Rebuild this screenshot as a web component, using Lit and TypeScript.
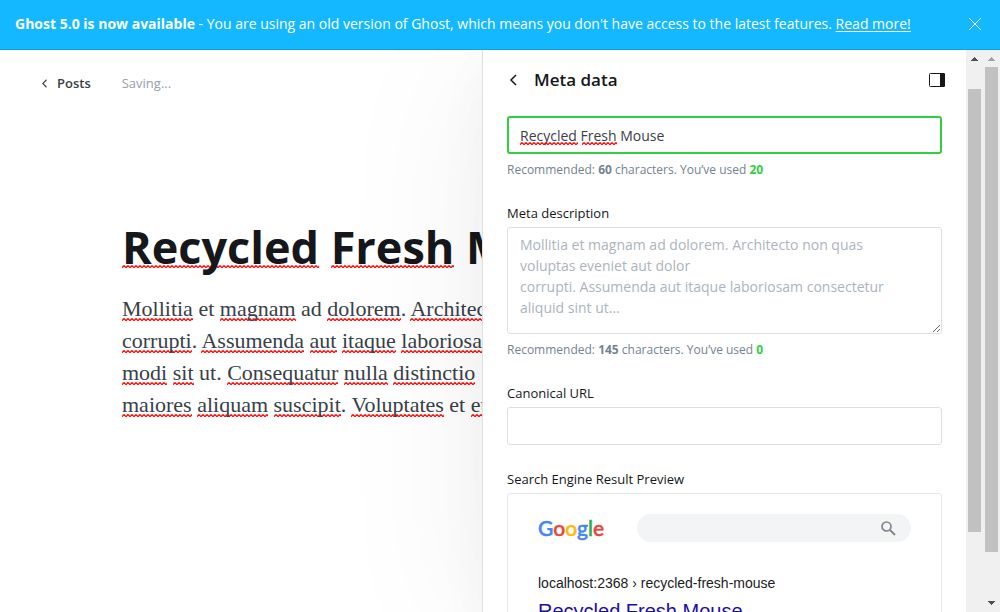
import {LitElement, html, css, svg} from "lit";
import {customElement, state} from "lit/decorators.js";

type Word = string | {misspelt: string};
const m = (misspelt: string): Word => ({misspelt});

const TITLE: Word[] = [m("Recycled"), " ", m("Fresh"), " Mouse"];
const BODY: Word[][] = [
  [m("Mollitia"), " et ", m("magnam"), " ad ", m("dolorem"), ". ", m("Architecto")],
  [m("corrupti"), ". ", m("Assumenda"), " ", m("aut"), " ", m("itaque"), " ", m("laboriosam")],
  [m("modi"), " ", m("sit"), " ut. ", m("Consequatur"), " ", m("nulla"), " ", m("distinctio")],
  [m("maiores"), " ", m("aliquam"), " ", m("suscipit"), ". ", m("Voluptates"), " et ", m("eum")],
];
const LOGO: [string, string][] = [
  ["G", "blue"], ["o", "red"], ["o", "yellow"], ["g", "blue"], ["l", "green"], ["e", "red"],
];
const EXCERPT =
  "Mollitia et magnam ad dolorem. Architecto non quas voluptas eveniet aut dolor\ncorrupti. Assumenda aut itaque laboriosam consectetur aliquid sint ut...";

const words = (list: Word[]) =>
  list.map((w) => (typeof w === "string" ? w : html`<span class="misspelt">${w.misspelt}</span>`));

const chevron = svg`<path d="M7 1 L2 6 L7 11" fill="none" stroke="currentColor" stroke-width="1.5"/>`;

@customElement("scroll-bar")
class ScrollBar extends LitElement {
  static properties = {
    start: {type: Number},
    length: {type: Number},
    dim: {type: Boolean},
    open: {type: Boolean},
  };
  declare start: number;
  declare length: number;
  declare dim: boolean;
  declare open: boolean;

  static styles = css`
    :host {
      position: relative; z-index: 2; display: flex; flex-direction: column; flex: none;
      width: 17px; background: #f0f0f0;
    }
    .arrow { display: block; flex: none; width: 17px; height: 17px; fill: #505050; }
    .dim { fill: #a3a3a3; }
    .track { flex: 1; display: flex; flex-direction: column; padding: 0 2px; }
    .thumb { background: #c1c1c1; }
  `;

  render() {
    return html`
      <svg class="arrow ${this.dim ? "dim" : ""}" viewBox="0 0 17 17" shape-rendering="crispEdges"><path d="M5 11 L8.500 7 L12 11Z"/></svg>
      <div class="track">
        <div style="height:${this.start}%"></div>
        <div class="thumb" style="height:${this.length}%"></div>
      </div>
      ${this.open ? "" : html`<svg class="arrow" viewBox="0 0 17 17" shape-rendering="crispEdges"><path d="M5 6 L8.500 10 L12 6Z"/></svg>`}
    `;
  }
}

@customElement("app-root")
class AppRoot extends LitElement {
  @state() private metaTitle = "Recycled Fresh Mouse";
  @state() private metaDescription = "";

  static styles = css`
    :host {
      display: flex; flex-direction: column; height: 100vh; overflow: hidden;
      background: #fff; color: #15171a;
      font: 14px/20px "Open Sans", "Noto Sans", sans-serif;
    }
    * { box-sizing: border-box; }
    button { padding: 0; border: 0; background: none; color: inherit; cursor: pointer; }
    svg { display: block; }

    .banner {
      position: relative; z-index: 3; flex: none; display: flex; align-items: center; justify-content: space-between;
      height: 50px; padding: 0 18px 1px 15px; color: #fff; background: #14b8ff; border-bottom: 1px solid #0f9ddd;
      white-space: nowrap;
    }
    .banner p { margin: 0; }
    .banner a { color: inherit; text-underline-offset: 2px; }

    .workspace { flex: 1; min-height: 0; display: flex; }
    .editor { flex: 1; min-width: 0; overflow: hidden; }
    .toolbar { display: flex; gap: 31px; padding: 23px 42px 0; font-size: 13px; }
    .back { display: flex; align-items: center; gap: 9px; color: #394047; font-weight: 600; text-decoration: none; }
    .status { color: #95a1ad; }
    .post { padding: 124px 0 0 122px; white-space: nowrap; }
    h1 { margin: 0; font-size: 45px; line-height: 60px; font-weight: 700; }
    .text { margin: 16px 0 0; font: 22px/32px "Liberation Serif", serif; color: #394047; }
    .line { display: block; }
    .misspelt {
      background: url("data:image/svg+xml,%3Csvg xmlns='http://www.w3.org/2000/svg' width='4' height='3'%3E%3Cpath d='M-1 3.500L2 .700L5 3.500M-1 -.100L0 .700' fill='none' stroke='red' stroke-width='1.300'/%3E%3C/svg%3E") repeat-x 0 100%;
    }
    h1 .misspelt { background-position-y: calc(100% - 9px); }

    .settings {
      position: relative; z-index: 1; flex: none; width: 484px;
      padding: 0 24px; background: #fff; border-left: 1px solid #dfe0e1;
      box-shadow: -16px 16px 140px rgba(0, 0, 0, .05), 0 20px 50px rgba(0, 0, 0, .04);
    }
    .settings header { display: flex; align-items: center; height: 66px; padding-bottom: 7px; }
    .settings header button:first-child { margin-right: 14px; padding: 2px; }
    h2 { flex: 1; margin: 0; font-size: 17px; line-height: 24px; font-weight: 600; }
    .settings header button:last-child { margin-right: -3px; }

    .group { position: relative; margin-bottom: 24px; }
    .label { display: block; margin: 0 0 4px; font-size: 13px; line-height: 20px; font-weight: 500; }
    .field {
      display: block; width: 100%; height: 38px; padding: 6px 12px; border: 1px solid #dddfe1; border-radius: 3px;
      font: 14px/21px "Open Sans", "Noto Sans", sans-serif; color: #394047; background: #fff; outline: 0;
    }
    .field.focus { border: 2px solid #30cf43; padding: 6px 11px; }
    textarea.field { height: 107px; padding-right: 24px; resize: vertical; }
    .field::placeholder { color: #abb4be; opacity: 1; }
    .marks { position: absolute; top: 26px; left: 13px; display: flex; gap: 4px; pointer-events: none; }
    .marks .misspelt { height: 3px; }
    .mark-long { width: 58px; }
    .mark-short { width: 35px; }
    .hint { margin: 6px 0 0; font-size: 12px; line-height: 19px; color: #738393; }
    .hint .used { color: #30cf43; }

    .preview {
      padding: 20px 30px; height: 400px; border: 1px solid #e5e7e9; border-radius: 3px;
      font-family: "Liberation Sans", sans-serif;
    }
    .search { display: flex; align-items: center; justify-content: space-between; margin-bottom: 30px; }
    .logo { font: 500 21px/28px Lato, sans-serif; -webkit-text-stroke: 0.5px currentColor; }
    .blue { color: #4285f4; }
    .red { color: #ea4335; }
    .yellow { color: #fbbc05; }
    .green { color: #34a853; }
    .pill {
      display: flex; align-items: center; justify-content: flex-end; width: 274px; height: 28px; padding-right: 15px;
      border-radius: 14px; background: #f3f4f6;
    }
    .url { line-height: 22px; color: #202124; }
    .result { display: block; margin-top: 4px; font-size: 20px; line-height: 26px; color: #1a0dab; text-decoration: none; }
    .group.last { margin: 0; }
  `;

  render() {
    return html`
      <div class="banner">
        <p><b>Ghost 5.0 is now available</b> - You are using an old version of Ghost, which means you don't have access to the latest features. <a href="#">Read more!</a></p>
        <button aria-label="Close">
          <svg width="14" height="14" viewBox="0 0 14 14" fill="none" stroke="#fff"><path d="M1 1 L13 13 M13 1 L1 13"/></svg>
        </button>
      </div>
      <div class="workspace">
        <main class="editor">
          <div class="toolbar">
            <a class="back" href="#"><svg width="6" height="9" viewBox="1 0 8 12">${chevron}</svg>Posts</a>
            <span class="status">Saving...</span>
          </div>
          <article class="post">
            <h1>${words(TITLE)}</h1>
            <p class="text">${BODY.map((line) => html`<span class="line">${words(line)}</span>`)}</p>
          </article>
        </main>
        <aside class="settings">
          <header>
            <button aria-label="Back"><svg width="9" height="12" viewBox="0 0 9 12">${chevron}</svg></button>
            <h2>Meta data</h2>
            <button aria-label="Toggle sidebar">
              <svg width="16" height="14" viewBox="0 0 16 14"><rect x=".5" y=".5" width="15" height="13" rx="1" fill="#fff" stroke="#15171a"/><path d="M11 0 H15 L16 1 V13 L15 14 H11Z" fill="#15171a"/></svg>
            </button>
          </header>
          <div class="group">
            <input class="field focus" aria-label="Meta title" spellcheck="false" .value=${this.metaTitle}
              @input=${(e: Event) => (this.metaTitle = (e.target as HTMLInputElement).value)}>
            <div class="marks" aria-hidden="true"><span class="misspelt mark-long"></span><span class="misspelt mark-short"></span></div>
            <p class="hint">Recommended: <b>60</b> characters. You’ve used <b class="used">${this.metaTitle.length}</b></p>
          </div>
          <div class="group">
            <label class="label" for="description">Meta description</label>
            <textarea class="field" id="description" placeholder=${EXCERPT} .value=${this.metaDescription}
              @input=${(e: Event) => (this.metaDescription = (e.target as HTMLTextAreaElement).value)}></textarea>
            <p class="hint">Recommended: <b>145</b> characters. You’ve used <b class="used">${this.metaDescription.length}</b></p>
          </div>
          <div class="group">
            <label class="label" for="canonical">Canonical URL</label>
            <input class="field" id="canonical">
          </div>
          <div class="group last">
            <h3 class="label">Search Engine Result Preview</h3>
            <div class="preview">
              <div class="search">
                <div class="logo">${LOGO.map(([letter, tint]) => html`<span class=${tint}>${letter}</span>`)}</div>
                <div class="pill">
                  <svg width="15" height="15" viewBox="0 0 15 15" fill="none" stroke="#80868b"><circle cx="5.500" cy="5.500" r="4.500" stroke-width="1.700"/><path d="M9 9 L14 14" stroke-width="2"/></svg>
                </div>
              </div>
              <div class="url">localhost:2368 › recycled-fresh-mouse</div>
              <a class="result" href="#">Recycled Fresh Mouse</a>
            </div>
          </div>
        </aside>
        <scroll-bar .start=${4} .length=${81.3} .open=${true}></scroll-bar>
        <scroll-bar .start=${0} .length=${91.8} .dim=${true}></scroll-bar>
      </div>
    `;
  }
}
